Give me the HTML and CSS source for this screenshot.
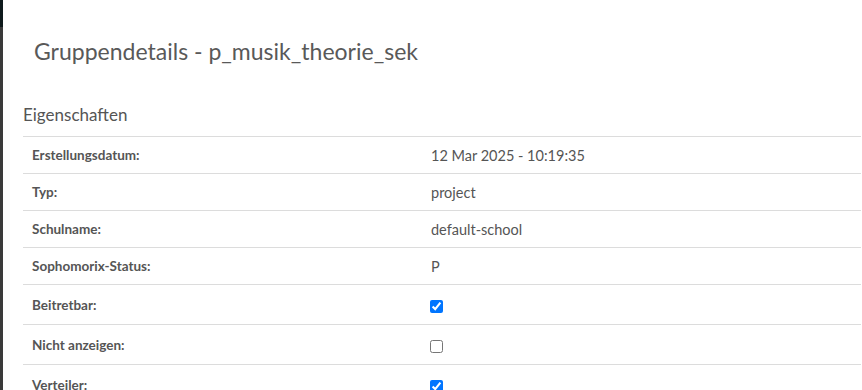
FILE: index.html
```html
<!DOCTYPE html>
<html lang="de">
<head>
<meta charset="utf-8">
<title>Gruppendetails</title>
<link rel="stylesheet" href="styles.css">
</head>
<body>
<div class="page">
  <div class="backdrop">
    <div class="backdrop-top"></div>
    <div class="backdrop-rest"></div>
  </div>
  <div class="modal">
    <div class="modal-header">
      <h3 class="modal-title">Gruppendetails - p_musik_theorie_sek</h3>
    </div>
    <div class="modal-body">
      <h4 class="section-title">Eigenschaften</h4>
      <table class="props">
        <tbody>
          <tr class="row-text"><th>Erstellungsdatum:</th><td>12 Mar 2025 - 10:19:35</td></tr>
          <tr class="row-text"><th>Typ:</th><td>project</td></tr>
          <tr class="row-text"><th>Schulname:</th><td>default-school</td></tr>
          <tr class="row-text"><th>Sophomorix-Status:</th><td>P</td></tr>
          <tr class="row-check"><th>Beitretbar:</th><td><input type="checkbox" checked></td></tr>
          <tr class="row-check"><th>Nicht anzeigen:</th><td><input type="checkbox"></td></tr>
          <tr class="row-check"><th>Verteiler:</th><td><input type="checkbox" checked></td></tr>
        </tbody>
      </table>
    </div>
  </div>
</div>
</body>
</html>
```
FILE: styles.css
```css
html, body {
  margin: 0;
  padding: 0;
  height: 100%;
  overflow: hidden;
}
body {
  font-family: Lato, "Open Sans", sans-serif;
  color: #555;
  background: #3a3a3a;
}
.page {
  display: flex;
  height: 390px;
}
.backdrop {
  width: 3px;
  flex: none;
  display: flex;
  flex-direction: column;
}
.backdrop-top {
  height: 27px;
  background: #0f1a1c;
}
.backdrop-rest {
  flex: 1;
  background: #3a3a3a;
}
.modal {
  flex: 1;
  background: #fff;
}
.modal-header {
  padding: 36px 31px 0;
  height: 60px;
  box-sizing: border-box;
}
.modal-title {
  margin: 0;
  font-size: 23px;
  font-weight: 400;
  line-height: 30px;
  color: #595959;
}
.modal-body {
  padding: 41px 1px 0 20px;
}
.section-title {
  margin: 0 0 7px;
  font-size: 17px;
  font-weight: 400;
  line-height: 28px;
  color: #555;
}
.props {
  width: 100%;
  border-collapse: collapse;
}
.props th, .props td {
  border-top: 1px solid #dcdcdc;
  padding: 0 9px;
  text-align: left;
  vertical-align: middle;
}
.props th {
  width: 381px;
  font-size: 13.5px;
  font-weight: 700;
  color: #555;
}
.props td {
  font-size: 14.5px;
  color: #555;
}
.row-text th, .row-text td {
  height: 36px;
}
.row-check th, .row-check td {
  height: 39px;
}
.props input {
  margin: 0 0 0 -1px;
  width: 13px;
  height: 13px;
  vertical-align: middle;
  accent-color: #0075ff;
}
```
